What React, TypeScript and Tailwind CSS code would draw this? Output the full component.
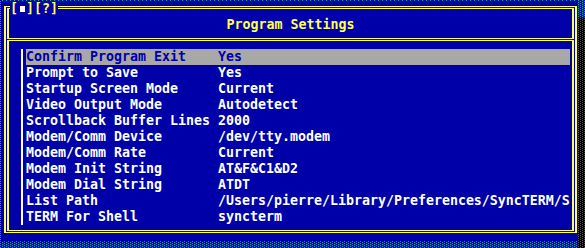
const items: [string, string][] = [
  ["Confirm Program Exit", "Yes"],
  ["Prompt to Save", "Yes"],
  ["Startup Screen Mode", "Current"],
  ["Video Output Mode", "Autodetect"],
  ["Scrollback Buffer Lines", "2000"],
  ["Modem/Comm Device", "/dev/tty.modem"],
  ["Modem/Comm Rate", "Current"],
  ["Modem Init String", "AT&F&C1&D2"],
  ["Modem Dial String", "ATDT"],
  ["List Path", "/Users/pierre/Library/Preferences/SyncTERM/S"],
  ["TERM For Shell", "syncterm"],
];

function Shadow({ className }: { className: string }) {
  // dark grey shade dots over black
  return (
    <div
      className={`bg-black bg-[image:conic-gradient(at_1px_1px,transparent_75%,#545454_0),conic-gradient(at_1px_1px,transparent_75%,#545454_0)] bg-[length:4px_2px] bg-[position:2px_0,0_1px] ${className}`}
    />
  );
}

export default function App() {
  const selected = 0;

  return (
    <div className="w-[585px] h-[248px] overflow-hidden pt-[1px] pl-[2px] bg-[#0000a8] bg-[image:conic-gradient(at_1px_1px,transparent_75%,#00a8a8_0),conic-gradient(at_1px_1px,transparent_75%,#00a8a8_0)] bg-[length:4px_2px] bg-[position:2px_0,0_1px] font-['DejaVu_Sans_Mono',monospace] font-bold text-[13.29px] leading-[16px]">
      <div className="flex">
        {/* Window */}
        <div className="relative w-[576px] h-[240px] shrink-0 bg-[#0000a8]">
          <div className="ml-[2px] mt-[5px] w-[573px] h-[227px] border-x-2 border-y border-[#ffff54] p-[1px] flex flex-col gap-[1px]">
            {/* Title */}
            <div className="h-[31px] border-x-2 border-y border-[#ffff54] pt-[8px] text-center text-[#ffff54] whitespace-pre">
              Program Settings
            </div>

            {/* Options */}
            <div className="flex-1 border-x-2 border-y border-[#ffff54] pt-[8px] pl-[12px]">
              <div className="border-l-2 border-white pl-[3px] w-[549px]">
                {items.map(([label, value], i) => (
                  <div
                    key={label}
                    className={`flex h-[16px] whitespace-pre overflow-hidden ${
                      i === selected ? "bg-[#a8a8a8] text-[#0000a8]" : "text-white"
                    }`}
                  >
                    <span className="w-[192px] shrink-0">{label}</span>
                    <span>{value}</span>
                  </div>
                ))}
              </div>
            </div>
          </div>

          {/* Close / help buttons */}
          <div className="absolute left-[8px] top-0 w-[48px] h-[16px] bg-[#0000a8] flex text-[#ffff54]">
            <span className="w-[8px] text-center">[</span>
            <span className="w-[8px] flex items-center justify-center">
              <span className="w-[5px] h-[6px] bg-white" />
            </span>
            <span className="w-[8px] text-center">]</span>
            <span className="w-[8px] text-center">[</span>
            <span className="w-[8px] text-center">?</span>
            <span className="w-[8px] text-center">]</span>
          </div>
        </div>

        <Shadow className="w-[8px] h-[240px] mt-[16px] shrink-0" />
      </div>
      <Shadow className="ml-[16px] w-[576px] h-[16px]" />
    </div>
  );
}
